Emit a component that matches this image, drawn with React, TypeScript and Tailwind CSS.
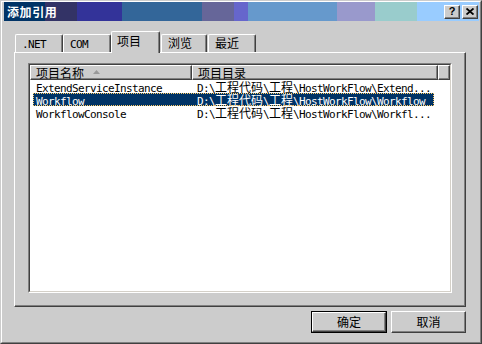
import React from "react";

const cjk = /([\u4e00-\u9fff]+)/;

function Mixed({ text }: { text: string }) {
  const parts = text.split(cjk).filter((p) => p !== "");
  return (
    <>
      {parts.map((p, i) =>
        cjk.test(p) ? (
          <span key={i} className="font-['Noto_Sans_CJK_SC',sans-serif] text-[12px] tracking-normal">
            {p}
          </span>
        ) : (
          <span key={i} className="font-['DejaVu_Sans_Mono',monospace] text-[11px] tracking-[-0.62px]">
            {p}
          </span>
        )
      )}
    </>
  );
}

function Tab({ label, selected, w, ml }: { label: string; selected?: boolean; w: string; ml: string }) {
  return (
    <div
      className={
        selected
          ? `${w} ${ml} h-[22px] -mb-px relative z-10 bg-[#cccccc] border-l border-t border-r border-l-white border-t-white border-r-[#404040] rounded-tl-[2px] rounded-tr-[2px] shadow-[inset_-1px_0_0_#808080] pl-[5px] pt-[2px] leading-[13px] whitespace-nowrap`
          : `${w} ${ml} h-[18px] bg-[#cccccc] border-l border-t border-r border-l-white border-t-white border-r-[#404040] rounded-tl-[2px] rounded-tr-[2px] shadow-[inset_-1px_0_0_#808080] pl-[6px] pt-[1px] leading-[13px] whitespace-nowrap`
      }
    >
      <Mixed text={label} />
    </div>
  );
}

const rows = [
  { name: "ExtendServiceInstance", path: "D:\\工程代码\\工程\\HostWorkFlow\\Extend..." },
  { name: "Workflow", path: "D:\\工程代码\\工程\\HostWorkFlow\\Workflow", sel: true },
  { name: "WorkflowConsole", path: "D:\\工程代码\\工程\\HostWorkFlow\\Workfl..." },
];

export default function App() {
  return (
    <div className="w-[482px] h-[344px] bg-[#cccccc] border border-t-[#cccccc] border-l-[#cccccc] border-r-[#404040] border-b-[#404040] text-black overflow-hidden">
      <div className="w-full h-full border border-t-white border-l-white border-r-[#808080] border-b-[#808080] flex flex-col">
        {/* title bar */}
        <div className="ml-[2px] w-[475px] h-[19px] flex items-center bg-[linear-gradient(to_right,#003366_41px,#333366_41px,#333366_73px,#333399_73px,#333399_118px,#336699_118px,#336699_198px,#666699_198px,#666699_230px,#6666cc_230px,#6666cc_244px,#6699cc_244px,#6699cc_333px,#9999cc_333px,#9999cc_371px,#99cccc_371px,#99cccc_413px,#99ccff_413px)]">
          <span className="pl-[3px] text-white font-bold text-[12px] tracking-[0.6px] font-['Noto_Sans_CJK_SC',sans-serif] leading-[19px]">
            添加引用
          </span>
          <div className="ml-auto mr-px flex gap-[2px]">
            <div className="w-[16px] h-[14px] bg-[#cccccc] border border-t-white border-l-white border-r-[#404040] border-b-[#404040] shadow-[inset_-1px_-1px_0_#808080] flex items-center justify-center text-[11px] font-bold leading-none font-['Liberation_Sans',sans-serif]">
              ?
            </div>
            <div className="w-[16px] h-[14px] bg-[#cccccc] border border-t-white border-l-white border-r-[#404040] border-b-[#404040] shadow-[inset_-1px_-1px_0_#808080] flex items-center justify-center">
              <svg width="8" height="7" viewBox="0 0 8 7">
                <path d="M0.5 0.5 L7.5 6.5 M7.5 0.5 L0.5 6.5" stroke="#000" strokeWidth="1.8" fill="none" />
              </svg>
            </div>
          </div>
        </div>

        {/* tabs */}
        <div className="ml-[13px] mt-[10px] h-[21px] flex items-end">
          <Tab label=".NET" w="w-[48px]" ml="ml-0" />
          <Tab label="COM" w="w-[48px]" ml="ml-0" />
          <Tab label="项目" w="w-[49px]" ml="ml-0" selected />
          <Tab label="浏览" w="w-[46px]" ml="ml-px" />
          <Tab label="最近" w="w-[48px]" ml="ml-px" />
        </div>

        {/* panel */}
        <div className="ml-[12px] w-[452px] h-[255px] border border-t-white border-l-white border-r-[#404040] border-b-[#404040] shadow-[inset_-1px_-1px_0_#808080]">
          <div className="ml-[13px] mt-[10px] w-[424px] h-[230px] border border-t-[#808080] border-l-[#808080] border-r-white border-b-white">
            <div className="w-full h-full bg-white border border-t-[#404040] border-l-[#404040] border-r-[#d4d0c8] border-b-[#d4d0c8]">
              {/* header */}
              <div className="flex h-[15px] bg-[#cccccc]">
                <div className="w-[162px] h-full border border-t-white border-l-white border-r-[#404040] border-b-[#404040] shadow-[inset_-1px_-1px_0_#808080] pl-[5px] flex items-center leading-[13px]">
                  <Mixed text="项目名称" />
                  <svg className="ml-[9px]" width="7" height="5" viewBox="0 0 7 5">
                    <path d="M3.5 0 L7 4 L0 4 Z" fill="#999999" />
                  </svg>
                </div>
                <div className="w-[246px] h-full border border-t-white border-l-white border-r-[#404040] border-b-[#404040] shadow-[inset_-1px_-1px_0_#808080] pl-[5px] flex items-center leading-[13px]">
                  <Mixed text="项目目录" />
                </div>
                <div className="flex-1 h-full border border-t-white border-l-white border-r-[#404040] border-b-[#404040] shadow-[inset_-1px_-1px_0_#808080]" />
              </div>
              {/* rows */}
              {rows.map((r) => (
                <div
                  key={r.name}
                  className={
                    r.sel
                      ? "ml-[3px] w-[401px] h-[13px] flex outline-1 outline-dotted -outline-offset-1 outline-[#ffcc66] bg-[#003366] text-white leading-[13px] whitespace-nowrap"
                      : "ml-[3px] w-[401px] h-[13px] flex leading-[13px] whitespace-nowrap"
                  }
                >
                  <div className="w-[159px] pl-[3px]">
                    <Mixed text={r.name} />
                  </div>
                  <div className="pl-[5px]">
                    <Mixed text={r.path} />
                  </div>
                </div>
              ))}
            </div>
          </div>
        </div>

        {/* buttons */}
        <div className="ml-[309px] mt-[4px] flex gap-[4px]">
          <div className="w-[76px] h-[22px] border border-black">
            <div className="w-full h-full border border-t-white border-l-white border-r-[#404040] border-b-[#404040] shadow-[inset_-1px_-1px_0_#808080] flex items-center justify-center text-[12px] font-['Noto_Sans_CJK_SC',sans-serif] leading-none">
              确定
            </div>
          </div>
          <div className="w-[75px] h-[22px] border border-t-white border-l-white border-r-[#404040] border-b-[#404040] shadow-[inset_-1px_-1px_0_#808080] flex items-center justify-center text-[12px] font-['Noto_Sans_CJK_SC',sans-serif] leading-none">
            取消
          </div>
        </div>
      </div>
    </div>
  );
}
